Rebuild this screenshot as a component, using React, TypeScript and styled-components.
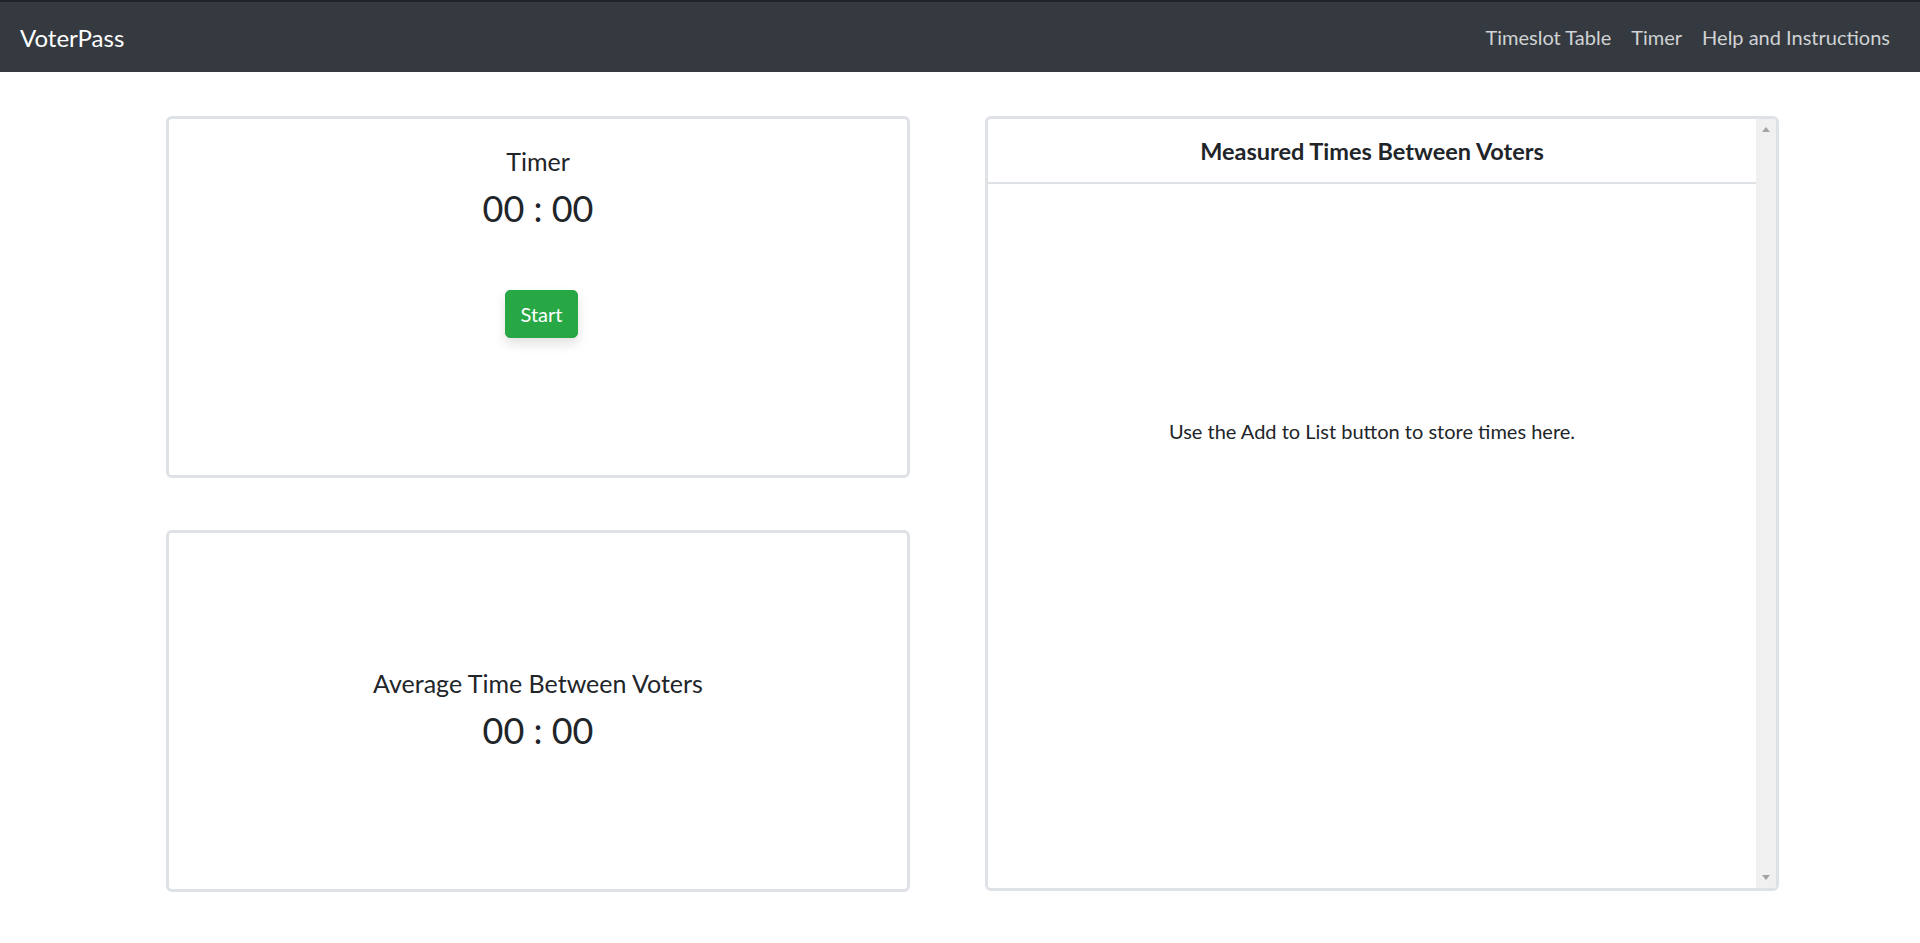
import React from "react";
import styled, { createGlobalStyle } from "styled-components";

const GlobalStyle = createGlobalStyle`
  html, body {
    margin: 0;
    padding: 0;
    background: #ffffff;
  }
  body {
    font-family: Lato, "Open Sans", "Liberation Sans", sans-serif;
    color: #212529;
  }
  * { box-sizing: border-box; }
`;

const Navbar = styled.nav`
  height: 72px;
  border-top: 2px solid #1f2327;
  background: #343a40;
  display: flex;
  align-items: center;
  justify-content: space-between;
  padding: 0 30px 0 20px;
`;

const Brand = styled.a`
  font-size: 24px;
  color: #ffffff;
  text-decoration: none;
`;

const NavList = styled.div`
  display: flex;
  align-items: center;
  gap: 20px;
`;

const NavLink = styled.a`
  font-size: 20px;
  color: rgba(255, 255, 255, 0.78);
  text-decoration: none;
`;

const Main = styled.main`
  display: grid;
  grid-template-columns: 744px 794px;
  column-gap: 75px;
  padding: 44px 0 0 166px;
`;

const LeftColumn = styled.div`
  display: flex;
  flex-direction: column;
  gap: 52px;
`;

const Card = styled.section<{ $centered?: boolean }>`
  height: 362px;
  border: 3px solid #dee2e6;
  border-radius: 6px;
  display: flex;
  flex-direction: column;
  align-items: center;
  justify-content: ${(p) => (p.$centered ? "center" : "flex-start")};
  padding-top: ${(p) => (p.$centered ? "0" : "27px")};
  padding-bottom: ${(p) => (p.$centered ? "3px" : "0")};
`;

const Label = styled.div`
  font-size: 25px;
  line-height: 30px;
  text-align: center;
`;

const Clock = styled.div`
  font-size: 36px;
  line-height: 44px;
  margin-top: 10px;
  text-align: center;
`;

const StartButton = styled.button`
  margin-top: 60px;
  margin-left: 7px;
  font-family: inherit;
  font-size: 20px;
  line-height: 30px;
  padding: 8px 15px;
  color: #ffffff;
  background: #28a745;
  border: 1px solid #28a745;
  border-radius: 5px;
  box-shadow: 0 6px 12px rgba(0, 0, 0, 0.12);
  cursor: pointer;
`;

const ListCard = styled.section`
  height: 775px;
  border: 3px solid #dee2e6;
  border-radius: 6px;
  display: flex;
  overflow: hidden;
`;

const ListContent = styled.div`
  flex: 1;
  min-width: 0;
`;

const ScrollTrack = styled.div`
  width: 20px;
  flex: none;
  background: #f0f0f0;
  display: flex;
  flex-direction: column;
  justify-content: space-between;
  align-items: center;
  padding: 8px 0;
`;

const Arrow = styled.span<{ $down?: boolean }>`
  width: 0;
  height: 0;
  border-left: 4.5px solid transparent;
  border-right: 4.5px solid transparent;
  ${(p) =>
    p.$down ? "border-top: 5px solid #a3a3a3;" : "border-bottom: 5px solid #a3a3a3;"}
`;

const ListHeader = styled.header`
  height: 65px;
  border-bottom: 2px solid #dee2e6;
  display: flex;
  align-items: center;
  justify-content: center;
  font-size: 23.5px;
  font-weight: 700;
`;

const ListBody = styled.div`
  padding-top: 234px;
  text-align: center;
  font-size: 20px;
  line-height: 26px;
`;

export default function App() {
  return (
    <>
      <GlobalStyle />
      <Navbar>
        <Brand href="#">VoterPass</Brand>
        <NavList>
          <NavLink href="#">Timeslot Table</NavLink>
          <NavLink href="#">Timer</NavLink>
          <NavLink href="#">Help and Instructions</NavLink>
        </NavList>
      </Navbar>
      <Main>
        <LeftColumn>
          <Card>
            <Label>Timer</Label>
            <Clock>00 : 00</Clock>
            <StartButton>Start</StartButton>
          </Card>
          <Card $centered>
            <Label>Average Time Between Voters</Label>
            <Clock>00 : 00</Clock>
          </Card>
        </LeftColumn>
        <ListCard>
          <ListContent>
            <ListHeader>Measured Times Between Voters</ListHeader>
            <ListBody>Use the Add to List button to store times here.</ListBody>
          </ListContent>
          <ScrollTrack>
            <Arrow />
            <Arrow $down />
          </ScrollTrack>
        </ListCard>
      </Main>
    </>
  );
}
